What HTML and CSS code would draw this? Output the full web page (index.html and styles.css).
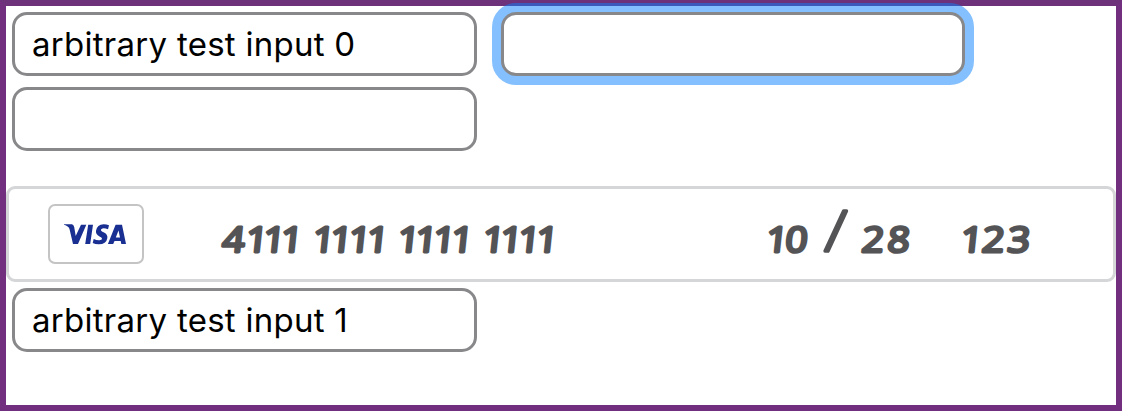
FILE: index.html
```html
<!DOCTYPE html>
<html lang="en">
<head>
<meta charset="utf-8">
<title>Card form</title>
<link rel="stylesheet" href="styles.css">
</head>
<body>
<main class="frame">
  <form class="form">
    <div class="row">
      <input class="field" type="text" value="arbitrary test input 0">
      <input class="field field-focused" type="text">
    </div>
    <div class="row row-second">
      <input class="field" type="text">
    </div>
    <section class="card">
      <div class="brand">
        <svg class="visa" viewBox="0 0 62 21" role="img" aria-label="Visa">
          <path d="M0 .3Q5 0 8 .3Q9.700 .8 10.200 3L11.700 12L17 .7H22.300L14 20H9L5.500 5Q4.500 2 0 .8ZM24.200 .7H29L26.200 20H21.200ZM45 1.200L44 5.200Q40.800 4 38.500 4.400Q36.500 5 37 6.500Q37.500 7.300 40 8.500Q44 10.500 43.300 14.200Q42.300 20.400 34.500 20.300Q31.200 20.300 28.700 19L29.700 14.900Q32.700 16.500 35.500 16.300Q38.200 16 38 14.500Q37.900 13.700 35.500 12.500Q31.500 10.500 32 6.800Q33 .4 39.700 .2Q42.500 .2 45 1.200ZM51.600 .7H58L62 20H57.300L56.700 17H50.500L49.200 20H43.900ZM54.500 6.500L51.800 13.400H56Z"/>
        </svg>
      </div>
      <svg class="digits number" viewBox="0 0 350 70"><text y="52.500" x="6.500 27.200 42.700 58.300 74 86.900 102.500 119 135.100 151 162.800 178.400 194.500 210.500 226 238.700 254.300 270.400 286.400">4111 1111 1111 1111</text></svg>
      <svg class="digits expiry" viewBox="0 0 160 70"><text y="52.500" x="4.200 21.900 43">10 </text><text class="slash" y="51.300" x="64.500">/</text><text y="52.500" x="90.700 114">28</text></svg>
      <svg class="digits cvv" viewBox="0 0 80 70"><text y="52.500" x="1.200 20.600 43.300">123</text></svg>
    </section>
    <div class="row row-last">
      <input class="field" type="text" value="arbitrary test input 1">
    </div>
  </form>
</main>
</body>
</html>
```
FILE: styles.css
```css
* { box-sizing: border-box; }
body { margin: 0; background: #fff; }
.frame {
  height: 411px;
  border: 6px solid #722f80;
  border-top-color: #6d3279;
}
.form { padding-top: 6px; }
.row { display: flex; gap: 24px; padding-left: 6px; }
.row-second { margin-top: 11px; }
.row-last { margin-top: 6px; }
.field {
  width: 465px;
  height: 64px;
  margin: 0;
  padding: 0 17px 1px;
  border: 3px solid #88888b;
  border-radius: 15px;
  outline: none;
  background: #fff;
  color: #000;
  font: 400 33px Inter, sans-serif;
  letter-spacing: 0.27px;
}
.field-focused {
  width: 464px;
  box-shadow: 0 0 0 9px rgba(10, 130, 255, 0.5);
}
.card {
  display: flex;
  align-items: flex-start;
  height: 96px;
  margin-top: 35px;
  padding-left: 39px;
  border: 3px solid #d4d6d8;
  border-radius: 9px;
}
.brand {
  display: flex;
  flex: none;
  width: 96px;
  height: 60px;
  margin-top: 15px;
  padding: 18px 0 0 14px;
  border: 2px solid #c4c4c4;
  border-radius: 7px;
}
.visa { width: 62px; height: 21px; fill: #192f91; }
.digits {
  flex: none;
  height: 70px;
  margin-top: 11px;
  overflow: visible;
  fill: #545457;
  stroke: #545457;
  stroke-width: 2.900px;
  stroke-linejoin: round;
  font: 400 35px "Open Sans", sans-serif;
}
.digits text { transform: translateX(5.5px) skewX(-6deg) scaleX(1.11); }
.number { width: 350px; margin-left: 70px; }
.expiry { width: 160px; margin-left: 196px; }
.cvv { width: 80px; margin-left: 38px; }
.number text, .cvv text { transform: translateX(5.5px) skewX(-6deg) scaleX(1.12); }
.digits .slash {
  font-size: 56px;
  font-weight: 300;
  stroke-width: 3.600px;
  transform: translateX(4.5px) skewX(-5deg);
}
```
